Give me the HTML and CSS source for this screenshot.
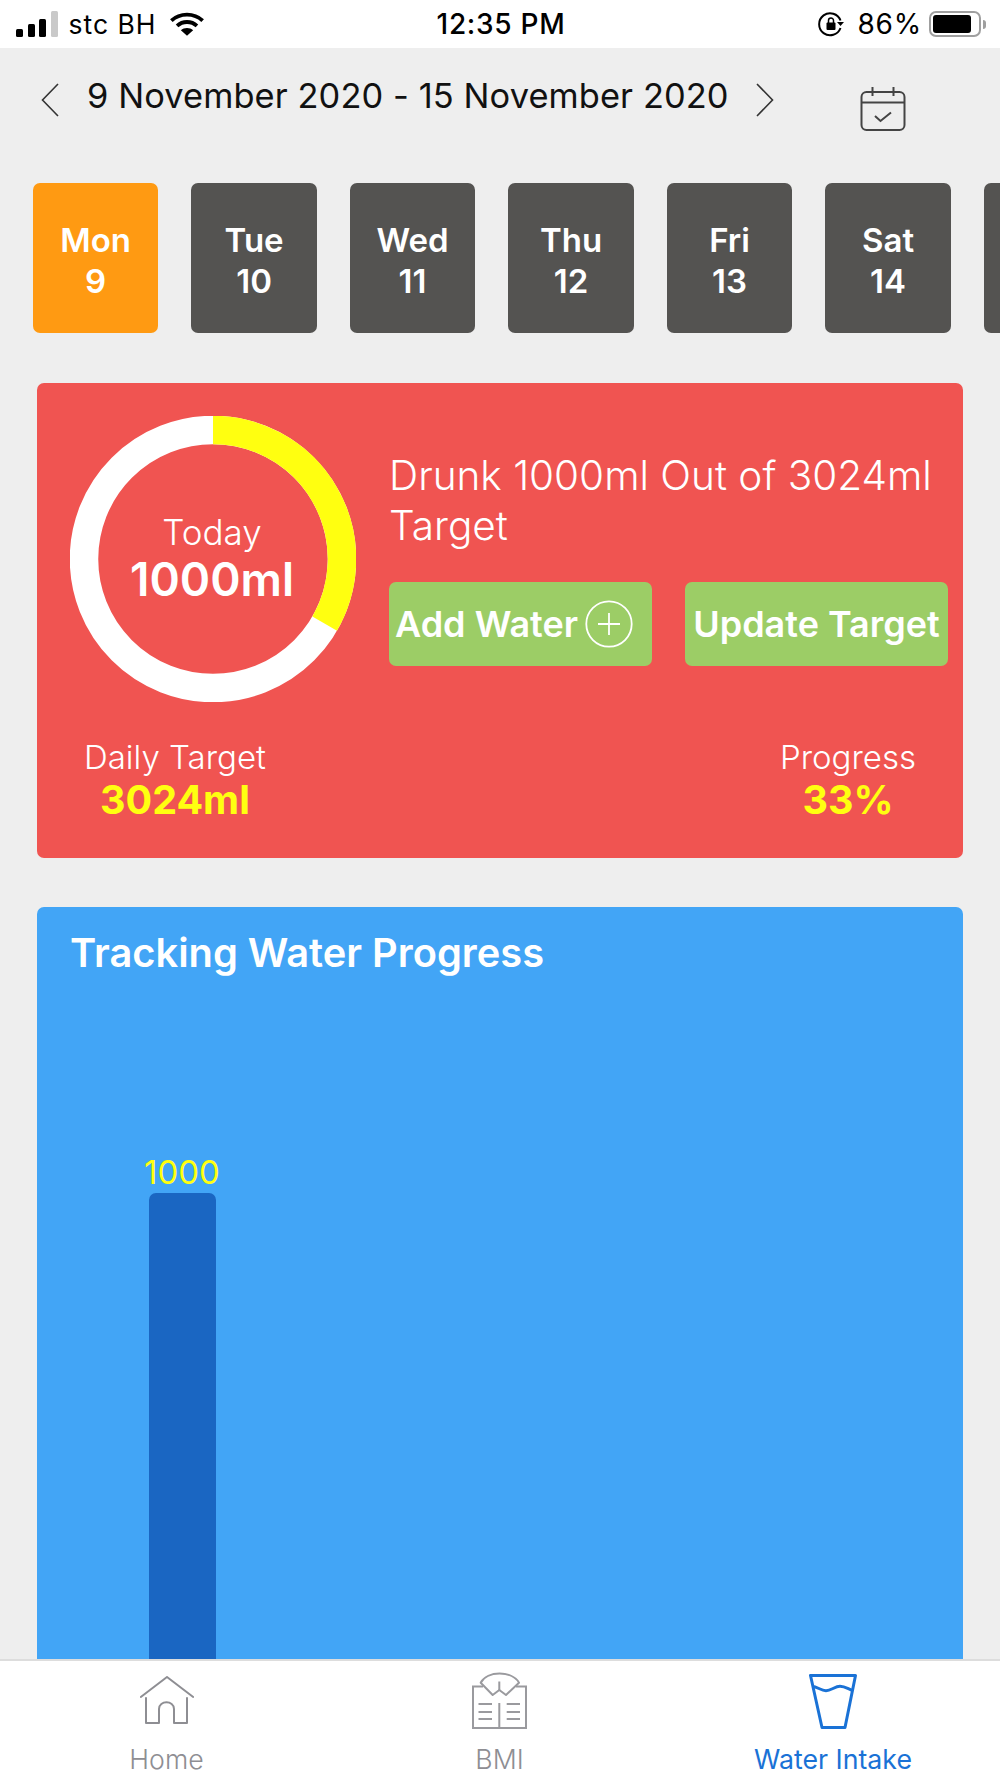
FILE: index.html
```html
<!DOCTYPE html>
<html lang="en">
<head>
<meta charset="utf-8">
<title>Water Intake</title>
<link rel="stylesheet" href="styles.css">
</head>
<body>
<div class="app">
  <header class="status">
    <div class="status-left">
      <div class="signal"><i class="b1"></i><i class="b2"></i><i class="b3"></i><i class="b4"></i></div>
      <span class="carrier">stc BH</span>
      <svg class="wifi" viewBox="0 0 38 26"><path d="M2.500 9.500C11.500 1 26.500 1 35.500 9.500" fill="none" stroke="#000" stroke-width="4"/><path d="M8.500 15C14.500 9.500 23.500 9.500 29.500 15" fill="none" stroke="#000" stroke-width="4"/><path d="M19 25.500L12.500 19.500C16 16.500 22 16.500 25.500 19.500Z" fill="#000"/></svg>
    </div>
    <div class="clock">12:35 PM</div>
    <div class="status-right">
      <svg class="lock" viewBox="0 0 26 26"><path d="M22.500 9.500A11 11 0 1 0 22.500 17" fill="none" stroke="#000" stroke-width="2"/><path d="M19 11h7l-3.500 4z" fill="#000"/><rect x="8.500" y="11.500" width="9" height="7.500" rx="1" fill="#000"/><path d="M10.500 12V9.500a2.500 2.500 0 0 1 5 0V12" fill="none" stroke="#000" stroke-width="1.500"/></svg>
      <span class="pct">86%</span>
      <div class="battery"><div class="battery-fill"></div></div>
      <div class="battery-tip"></div>
    </div>
  </header>

  <div class="range">
    <svg class="chev chev-l" viewBox="0 0 18 34"><path d="M17 1L1.500 17L17 33" fill="none" stroke="#333" stroke-width="1.600"/></svg>
    <span class="range-text">9 November 2020 - 15 November 2020</span>
    <svg class="chev chev-r" viewBox="0 0 18 34"><path d="M1 1L16.500 17L1 33" fill="none" stroke="#333" stroke-width="1.600"/></svg>
    <svg class="cal" viewBox="0 0 46 46"><rect x="1.500" y="6" width="43" height="38" rx="5" fill="none" stroke="#444" stroke-width="2"/><path d="M1.500 16.500H44.500M12.500 1V10M33.500 1V10M15 30l5.500 5L31 26.500" fill="none" stroke="#444" stroke-width="2"/></svg>
  </div>

  <div class="days">
    <div class="day day-on">Mon<br>9</div>
    <div class="day">Tue<br>10</div>
    <div class="day">Wed<br>11</div>
    <div class="day">Thu<br>12</div>
    <div class="day">Fri<br>13</div>
    <div class="day">Sat<br>14</div>
    <div class="day"></div>
  </div>

  <section class="summary">
    <div class="summary-top">
      <div class="donut">
        <svg class="ring" viewBox="0 0 286 286">
          <circle cx="143" cy="143" r="129" fill="none" stroke="#fff" stroke-width="28.500"/>
          <path d="M143 14A129 129 0 0 1 254.700 207.500" fill="none" stroke="#ffff10" stroke-width="28.500"/>
        </svg>
        <div class="donut-text">
          <div class="today">Today</div>
          <div class="amount">1000ml</div>
        </div>
      </div>
      <div class="summary-side">
        <p class="drunk">Drunk 1000ml Out of 3024ml Target</p>
        <div class="actions">
          <div class="btn btn-add">Add Water
            <svg class="plus" viewBox="0 0 48 48"><circle cx="24" cy="24" r="22.700" fill="none" stroke="#fff" stroke-width="1.800"/><path d="M24 13V35M13 24H35" stroke="#fff" stroke-width="1.800"/></svg>
          </div>
          <div class="btn btn-update">Update Target</div>
        </div>
      </div>
    </div>
    <div class="stats">
      <div class="stat"><div class="stat-label">Daily Target</div><div class="stat-val">3024ml</div></div>
      <div class="stat"><div class="stat-label">Progress</div><div class="stat-val">33%</div></div>
    </div>
  </section>

  <section class="chart">
    <h2 class="chart-title">Tracking Water Progress</h2>
    <div class="bar-col">
      <div class="bar-val">1000</div>
      <div class="bar"></div>
    </div>
  </section>

  <nav class="tabs">
    <div class="tab">
      <svg class="tab-icon tab-icon-home" viewBox="0 0 54 48"><path d="M0.800 21L27 1L53.200 21M6 22V47H19V33C19 24 34 24 34 33V47H47V22" fill="none" stroke="#8e8e93" stroke-width="2" stroke-linejoin="round" stroke-linecap="round"/></svg>
      <span>Home</span>
    </div>
    <div class="tab">
      <svg class="tab-icon tab-icon-bmi" viewBox="0 0 55 57"><path d="M11 14.500H1V56H54V14.500H44M27.300 31V56M6.500 32H20M6.500 40H20M6.500 47H20M34.700 32H48M34.700 40H48M34.700 47H48M27.300 9.500V18" fill="none" stroke="#9a9a9e" stroke-width="2"/><path d="M8.700 10.700C15 -1.500 40 -1.500 47 10.700L34 23L27.300 18L20.700 23Z" fill="none" stroke="#9a9a9e" stroke-width="2" stroke-linejoin="round"/></svg>
      <span>BMI</span>
    </div>
    <div class="tab tab-on">
      <svg class="tab-icon tab-icon-water" viewBox="0 0 48 55"><path d="M1.500 1.500H46.500L36 53.500H13Z" fill="none" stroke="#1a72d6" stroke-width="3" stroke-linejoin="round"/><path d="M3.500 12.500C8 12.500 12 16.700 17 16.700C22 16.700 26 12.300 31 12.300C36 12.300 39 15 44 16.700" fill="none" stroke="#1a72d6" stroke-width="3"/></svg>
      <span>Water Intake</span>
    </div>
  </nav>
</div>
</body>
</html>
```
FILE: styles.css
```css
* { box-sizing: border-box; }
html, body { margin: 0; padding: 0; }
body { font-family: Inter, "Liberation Sans", sans-serif; background: #eee; }
.app { width: 1000px; height: 1778px; display: flex; flex-direction: column; overflow: hidden; background: #eeeeee; }

.status { height: 48px; flex: none; background: #fff; display: grid; grid-template-columns: 1fr auto 1fr; align-items: center; padding: 0 14px 0 16px; color: #000; }
.status-left { display: flex; align-items: center; }
.signal { display: flex; align-items: flex-end; gap: 4.500px; height: 26px; }
.signal i { display: block; width: 7px; border-radius: 1.500px; background: #000; }
.signal .b1 { height: 8px; }
.signal .b2 { height: 13px; }
.signal .b3 { height: 18px; }
.signal .b4 { height: 26px; background: #c9c9c9; }
.carrier { font-size: 26.500px; margin-left: 11px; letter-spacing: 1px; }
.wifi { width: 36px; height: 26px; margin-left: 12px; }
.clock { font-size: 28px; font-weight: 500; letter-spacing: 0.700px; }
.status-right { display: flex; align-items: center; justify-content: flex-end; }
.lock { width: 26px; height: 26px; margin-right: 13px; }
.pct { font-size: 28px; margin-right: 7px; letter-spacing: 0.800px; }
.battery { width: 52px; height: 26px; border: 2px solid #9f9f9f; border-radius: 7px; padding: 2px; }
.battery-fill { width: 38px; height: 100%; background: #000; border-radius: 3px; }
.battery-tip { width: 3px; height: 9px; margin-left: 2px; background: #9f9f9f; border-radius: 0 3px 3px 0; }

.range { height: 88px; flex: none; display: flex; align-items: center; padding: 15px 0 0 41px; color: #111; }
.chev { width: 18px; height: 34px; flex: none; }
.range-text { font-size: 34.400px; margin: 0 0 7.500px 28px; white-space: nowrap; letter-spacing: 0.100px; }
.chev-r { margin-left: 27px; }
.cal { width: 46px; height: 46px; margin-left: 86px; margin-top: 19px; }

.days { flex: none; display: flex; gap: 33.300px; padding: 47px 0 0 33px; height: 197px; }
.day { flex: none; width: 125.200px; height: 150px; background: #545351; color: #fff; border-radius: 7px; font-size: 33px; font-weight: 600; line-height: 41px; text-align: center; padding-top: 37px; }
.day-on { background: #ff9a12; }

.summary { flex: none; margin: 50px 37px 0; height: 475px; background: #f05451; border-radius: 7px; color: #fff; padding: 33px 15px 0 33px; }
.summary-top { display: flex; align-items: flex-start; }
.donut { position: relative; width: 286px; height: 286px; flex: none; }
.ring { display: block; width: 286px; height: 286px; }
.donut-text { position: absolute; inset: 0 2px 0 0; display: flex; flex-direction: column; align-items: center; justify-content: center; }
.today { font-size: 35px; line-height: 40px; font-weight: 300; }
.amount { font-size: 46px; line-height: 54px; font-weight: 600; }
.summary-side { margin-left: 33px; flex: 1; min-width: 0; }
.drunk { margin: 35px 0 0; font-size: 40.500px; line-height: 50px; font-weight: 300; white-space: normal; }
.actions { display: flex; gap: 33px; margin-top: 31px; width: 559px; }
.btn { height: 84px; flex: none; background: #9ccd66; border-radius: 7px; font-size: 36px; font-weight: 600; display: flex; align-items: center; justify-content: center; white-space: nowrap; }
.btn-update { width: 263px; }
.btn-add { width: 263px; justify-content: flex-start; padding-left: 6px; gap: 7px; }
.plus { width: 48px; height: 48px; flex: none; }

.stats { display: flex; justify-content: space-between; padding: 35px 32px 0 14px; }
.stat { text-align: center; }
.stat-label { font-size: 33px; line-height: 40px; font-weight: 300; }
.stat-val { font-size: 39.500px; line-height: 46px; font-weight: 700; color: #ffff10; }

.chart { flex: none; margin: 49px 37px 0; height: 800px; background: #42a5f6; border-radius: 7px 7px 0 0; color: #fff; }
.chart-title { margin: 0; padding: 24px 0 0 33px; font-size: 39.800px; line-height: 44px; font-weight: 600; }
.bar-col { width: 90px; margin: 180px 0 0 100px; display: flex; flex-direction: column; align-items: center; }
.bar-val { font-size: 33px; line-height: 34px; margin-bottom: 4px; color: #ffff10; font-weight: 400; }
.bar { width: 67px; height: 500px; flex: none; background: #1a66c2; border-radius: 7px 7px 0 0; }

.tabs { position: absolute; left: 0; top: 1659px; width: 1000px; height: 119px; background: #fff; border-top: 2px solid #ddd; display: grid; grid-template-columns: 333px 333px 334px; }
.tab { display: flex; flex-direction: column; align-items: center; color: #8e8e93; font-size: 26.700px; font-weight: 300; position: relative; }
.tab-icon { flex: none; }
.tab-icon-home { width: 54px; height: 48px; margin-top: 15px; }
.tab-icon-bmi { width: 55px; height: 57px; margin-top: 11px; }
.tab-icon-water { width: 48px; height: 55px; margin-top: 13px; }
.tab span { position: absolute; top: 82px; white-space: nowrap; }
.tab-on { color: #1a72d6; font-weight: 400; }
```
